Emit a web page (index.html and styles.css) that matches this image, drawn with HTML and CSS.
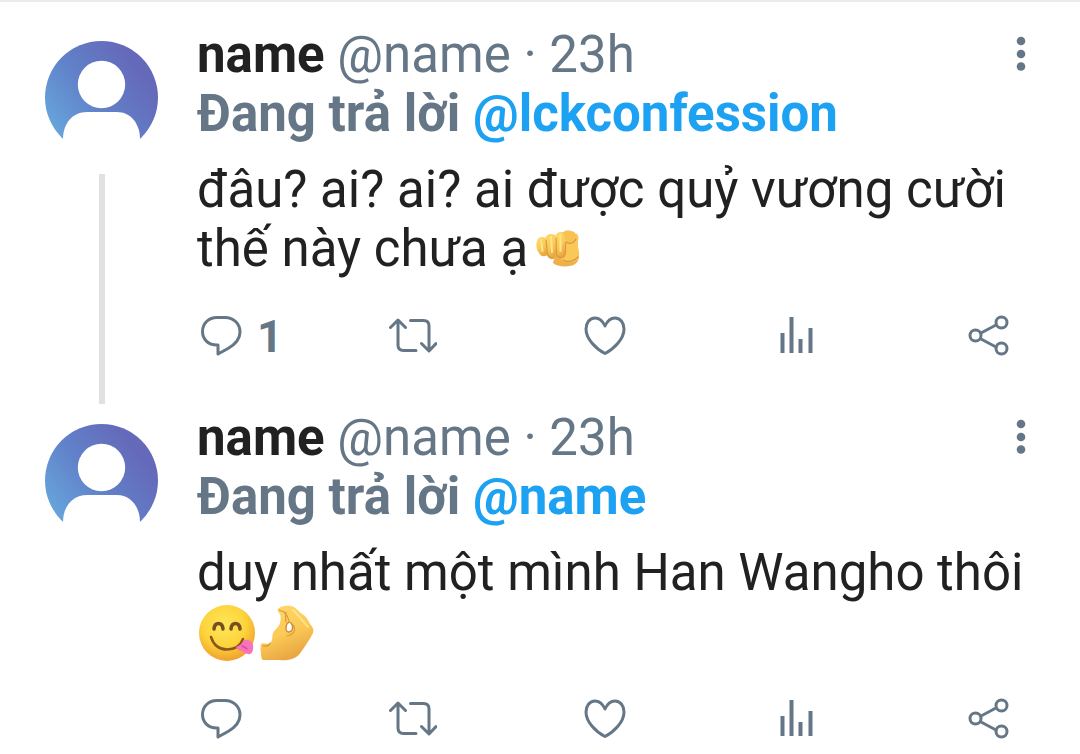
FILE: index.html
```html
<!DOCTYPE html>
<html lang="vi">
<head>
<meta charset="utf-8">
<meta name="viewport" content="width=device-width, initial-scale=1">
<title>Thread</title>
<link rel="stylesheet" href="styles.css">
</head>
<body>
<svg class="defs" aria-hidden="true">
  <defs>
    <linearGradient id="avatar-bg" x1="0" y1="0.8" x2="0.8" y2="0.2">
      <stop offset="0" stop-color="#68aadd"/><stop offset="0.5" stop-color="#6182ca"/><stop offset="1" stop-color="#6569b9"/>
    </linearGradient>
    <linearGradient id="skin" x1="0" y1="0" x2="0.4" y2="1">
      <stop offset="0" stop-color="#ffda6c"/><stop offset="0.6" stop-color="#fbc956"/><stop offset="1" stop-color="#e9a842"/>
    </linearGradient>
    <radialGradient id="face" cx="0.45" cy="0.35" r="0.65">
      <stop offset="0" stop-color="#ffe75a"/><stop offset="0.6" stop-color="#fdd33b"/><stop offset="1" stop-color="#f0a02d"/>
    </radialGradient>
    <symbol id="avatar" viewBox="0 0 113 113">
      <circle cx="56.5" cy="56.5" r="56.5" fill="url(#avatar-bg)"/>
      <circle cx="56.5" cy="43.500" r="23.700" fill="#fff"/>
      <path d="M18 98C18 82 28 71 42 71H72C85 71 95 82 95 98V114H18Z" fill="#fff"/>
    </symbol>
    <symbol id="reply" viewBox="0 0 48 48">
      <path d="M20 5.500H28C37 5.500 43 12 43 20C43 28 38 32.500 31 36.500L21 42V33H20C11 33 5.500 27 5.500 19.500C5.500 11.500 11.500 5.500 20 5.500Z"/>
    </symbol>
    <symbol id="retweet" viewBox="0 0 48 48">
      <path d="M1.500 15.500L9 8L16.500 15.500M9 8V33Q9 38.500 14.500 38.500H27M21.500 8.500H34.500Q40 8.500 40 14V38.500M32.500 31.500L40 39L47 31.500"/>
    </symbol>
    <symbol id="heart" viewBox="0 0 48 48">
      <path d="M24 14C21.500 8.500 18 6 14 6C8.500 6 5 11 5 17C5 27 15 37 24 41.500C33 37 43 27 43 17C43 11 39.500 6 34 6C30 6 26.500 8.500 24 14Z"/>
    </symbol>
    <symbol id="stats" viewBox="0 0 48 48">
      <path d="M9.500 21V41M18.500 5V41M27.500 27V41M37.500 16V41" stroke-width="4" stroke-linecap="butt"/>
    </symbol>
    <symbol id="share" viewBox="0 0 48 48">
      <path d="M16 21L31 13M16 27L31 35"/>
      <circle cx="10.500" cy="23.500" r="5.500"/><circle cx="36.500" cy="10.500" r="5.500"/><circle cx="36.500" cy="36.500" r="5.500"/>
    </symbol>
    <symbol id="more" viewBox="0 0 48 48">
      <circle cx="24" cy="10" r="4.300"/><circle cx="24" cy="23" r="4.300"/><circle cx="24" cy="35.500" r="4.300"/>
    </symbol>
  </defs>
</svg>

<main class="thread">
  <article class="post">
    <div class="rail">
      <svg class="avatar" role="img" aria-label="name"><use href="#avatar"/></svg>
      <div class="connector"></div>
    </div>
    <div class="content">
      <header class="head">
        <div class="byline"><strong class="author">name</strong> @name · 23h</div>
        <button class="more" type="button" aria-label="Thêm"><svg class="icon solid"><use href="#more"/></svg></button>
      </header>
      <div class="replying">Đang trả lời <a class="mention" href="#lckconfession">@lckconfession</a></div>
      <p class="text">đâu? ai? ai? ai được quỷ vương cười thế này chưa ạ<svg class="emoji" viewBox="0 0 60 60" role="img" aria-label="🫵">
          <path d="M36 22L50 20C49 25 51 31 51 36C51 41 48 45 42 46C35 47 28 46 25 43L27 36Z" fill="#eeb04a"/>
          <path d="M46 14Q50 12 50.500 18Q49 25 51 33Q52 39 48 41Q40 44 33 40L37 24Z" fill="#fac857"/>
          <path d="M9 21Q10 17 14 17Q18 17 19 20L20 33Q20 36 17 36Q13 37 11 33Q7 28 9 21Z" fill="url(#skin)"/>
          <path d="M17 19Q18 14 23 14Q28 14 28.500 18L29 34Q29 38 25 39Q20 39 19 35Z" fill="url(#skin)"/>
          <path d="M27 17Q28 12 33 12Q38 12 38 17L37.500 34Q37 38 33 38Q28.500 38 28.500 34Z" fill="url(#skin)"/>
          <path d="M34 13Q38 9 43 11Q48 11 48 17Q48 24 42 24Q37 23 37 17Q36 14 34 13Z" fill="#f8c252"/>
          <path d="M18 20L19.500 34Q21 38 25 38.500M28 18L28.500 34Q30 38 34 37.500Q37 37 37.500 32V23M38 22Q44 26 48 19M35 40Q43 44 50 37" fill="none" stroke="#da9940" stroke-width="1.200" stroke-linecap="round"/>
          <path d="M13 20L14.500 31M23 17L24 32M32.500 15V31" fill="none" stroke="#ffe58c" stroke-width="2" stroke-linecap="round"/>
        </svg></p>
      <div class="actions">
        <button class="action" type="button" aria-label="Trả lời 1"><svg class="icon"><use href="#reply"/></svg><span class="count">1</span></button>
        <button class="action" type="button" aria-label="Tweet lại"><svg class="icon"><use href="#retweet"/></svg></button>
        <button class="action" type="button" aria-label="Thích"><svg class="icon"><use href="#heart"/></svg></button>
        <button class="action" type="button" aria-label="Thống kê"><svg class="icon"><use href="#stats"/></svg></button>
        <button class="action" type="button" aria-label="Chia sẻ"><svg class="icon"><use href="#share"/></svg></button>
      </div>
    </div>
  </article>

  <article class="post">
    <div class="rail">
      <svg class="avatar" role="img" aria-label="name"><use href="#avatar"/></svg>
    </div>
    <div class="content">
      <header class="head">
        <div class="byline"><strong class="author">name</strong> @name · 23h</div>
        <button class="more" type="button" aria-label="Thêm"><svg class="icon solid"><use href="#more"/></svg></button>
      </header>
      <div class="replying">Đang trả lời <a class="mention" href="#name">@name</a></div>
      <p class="text">duy nhất một mình Han Wangho thôi <svg class="emoji" viewBox="0 0 60 60" role="img" aria-label="😋">
          <circle cx="30" cy="30" r="28" fill="url(#face)"/>
          <path d="M17 26Q17.500 20.500 21.500 20.500Q25.500 20.500 26 26M34 26Q34.500 20.500 38.500 20.500Q42.500 20.500 43 26" fill="none" stroke="#76501f" stroke-width="3.500" stroke-linecap="round"/>
          <path d="M14 34Q18 46.500 30 46.500Q42 46.500 46 36" fill="none" stroke="#8a581d" stroke-width="2.500" stroke-linecap="round"/>
          <path d="M39 44Q45 42 47 37Q54 36 56 42Q57 49 53 51Q49 52 45 48Q41 48 39 44Z" fill="#f873bb"/>
          <path d="M45 43Q48 44 50 46" fill="none" stroke="#dc4b98" stroke-width="1.500" stroke-linecap="round"/>
        </svg><svg class="emoji" viewBox="0 0 60 60" role="img" aria-label="🤌">
          <path d="M21 6C23 3 30 2 34 3C39 4 41 8 45 11C49 13 51 17 53 21C56 24 57 27 56 30C52 38 48 43 44 49C40 56 31 58 22 57L6 57Q4 56 4 51Q3 46 4 41C6 39 10 42 13 40C16 38 15 33 16 30C18 26 22 24 23 20C24 16 24 12 22 10Q20 8 21 6Z" fill="url(#skin)"/>
          <path d="M32 19Q29 21 29 25Q29 29 32 29Q36 28 35.500 24Q35 20 32 19Z" fill="#fff" stroke="#c98b3c" stroke-width="1.300"/>
          <path d="M22 7L27 9Q31 13 32 18M29 9Q28 14 29 19M34 20Q39 24 37 29Q35 32 30 33M13 40Q12 44 6 43" fill="none" stroke="#d99a3d" stroke-width="1.200" stroke-linecap="round"/>
          <path d="M36 7Q43 14 51 24" fill="none" stroke="#ffe38a" stroke-width="2" stroke-linecap="round"/>
        </svg></p>
      <div class="actions">
        <button class="action" type="button" aria-label="Trả lời"><svg class="icon"><use href="#reply"/></svg></button>
        <button class="action" type="button" aria-label="Tweet lại"><svg class="icon"><use href="#retweet"/></svg></button>
        <button class="action" type="button" aria-label="Thích"><svg class="icon"><use href="#heart"/></svg></button>
        <button class="action" type="button" aria-label="Thống kê"><svg class="icon"><use href="#stats"/></svg></button>
        <button class="action" type="button" aria-label="Chia sẻ"><svg class="icon"><use href="#share"/></svg></button>
      </div>
    </div>
  </article>
</main>
</body>
</html>
```

FILE: styles.css
```css
* { box-sizing: border-box; }

body {
  margin: 0;
  background: #fff;
  color: #212121;
  font-family: Roboto, sans-serif;
  font-size: 51px;
  line-height: 59px;
}

.defs { display: block; width: 0; height: 0; }

.thread {
  border-top: 2px solid #ebebeb;
  padding: 19px 35px 0 45px;
}

.post { display: flex; gap: 39px; }

.post:last-child .content { padding-bottom: 0; }

.rail {
  display: flex;
  flex-direction: column;
  align-items: center;
  gap: 20px;
  flex: none;
  padding-top: 20px;
}

.avatar { display: block; width: 113px; height: 113px; }

.connector { flex: 1; width: 6px; background: #e1e1e1; }

.content { flex: 1; min-width: 0; padding: 4px 0 40px; }

.head { display: flex; justify-content: space-between; align-items: center; }

.byline, .replying { color: #657786; }

.author { color: #212121; font-weight: 700; }

.replying { font-weight: 700; }

.mention { color: #1da1f2; text-decoration: none; }

.text { margin: 17px 0 0; }

.emoji { width: 60px; height: 60px; vertical-align: -8px; margin: -6px 0; }

.actions {
  display: flex;
  justify-content: space-between;
  margin: 30px 32px 0 0;
}

button {
  border: 0;
  padding: 0;
  background: none;
  color: #657786;
  font: inherit;
  cursor: pointer;
}

.more { display: flex; }

.action {
  display: flex;
  align-items: center;
  gap: 12px;
  width: 48px;
  height: 56px;
}

.count { font-size: 45px; font-weight: 700; }

.icon {
  flex: none;
  width: 48px;
  height: 48px;
  fill: none;
  stroke: currentColor;
  stroke-width: 3;
  stroke-linecap: round;
  stroke-linejoin: round;
}

.solid { fill: currentColor; stroke: none; }
```
